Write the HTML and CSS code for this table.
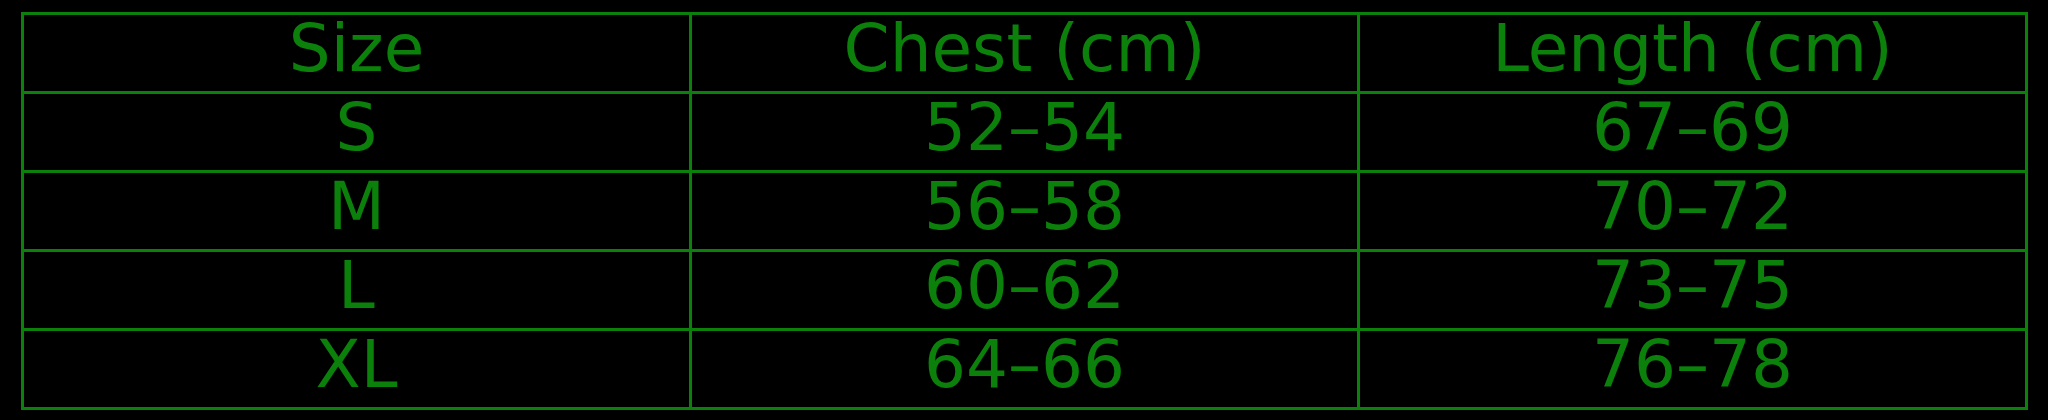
FILE: index.html
```html
<!DOCTYPE html>
<html>
<head>
<meta charset="utf-8">
<link rel="stylesheet" href="styles.css">
</head>
<body>
<table class="size-table">
  <tr><td>Size</td><td>Chest (cm)</td><td>Length (cm)</td></tr>
  <tr><td>S</td><td>52–54</td><td>67–69</td></tr>
  <tr><td>M</td><td>56–58</td><td>70–72</td></tr>
  <tr><td>L</td><td>60–62</td><td>73–75</td></tr>
  <tr><td>XL</td><td>64–66</td><td>76–78</td></tr>
</table>
</body>
</html>
```
FILE: styles.css
```css
html, body {
  margin: 0;
  background: #000;
}
body {
  padding: 12px 0 0 21px;
}
.size-table {
  border-collapse: collapse;
  width: 2007px;
  table-layout: fixed;
  font-family: "DejaVu Sans", sans-serif;
  font-size: 66px;
  color: #0b800b;
}
.size-table td {
  border: 3px solid #0b800b;
  text-align: center;
  height: 68px;
  padding: 0 0 8px 0;
  line-height: 68px;
  vertical-align: middle;
  white-space: nowrap;
}
```
